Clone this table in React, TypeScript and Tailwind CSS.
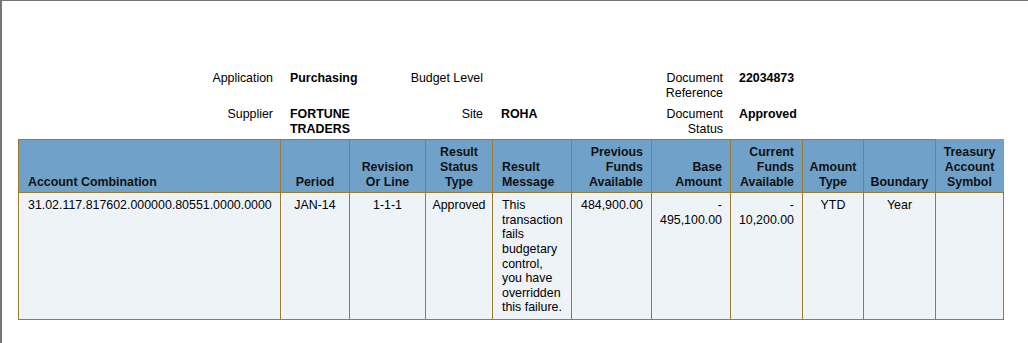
import type { ReactNode } from 'react';

type Align = 'left' | 'center' | 'right';

type Column = {
    label: string;
    width: string;
    align: Align;
};

const columns: Column[] = [
    { label: 'Account Combination', width: 'w-[262px]', align: 'left' },
    { label: 'Period', width: 'w-[69px]', align: 'center' },
    { label: 'Revision Or Line', width: 'w-[76px]', align: 'center' },
    { label: 'Result Status Type', width: 'w-[67px]', align: 'center' },
    { label: 'Result Message', width: 'w-[79px]', align: 'left' },
    { label: 'Previous Funds Available', width: 'w-[80px]', align: 'right' },
    { label: 'Base Amount', width: 'w-[79px]', align: 'right' },
    { label: 'Current Funds Available', width: 'w-[72px]', align: 'right' },
    { label: 'Amount Type', width: 'w-[61px]', align: 'center' },
    { label: 'Boundary', width: 'w-[72px]', align: 'center' },
    { label: 'Treasury Account Symbol', width: 'w-[68px]', align: 'center' },
];

const alignClass: Record<Align, string> = {
    left: 'text-left pl-[9px] pr-[8px]',
    center: 'text-center px-[5px]',
    right: 'text-right pl-[5px] pr-[8px]',
};

const row: ReactNode[] = [
    '31.02.117.817602.000000.80551.0000.0000',
    'JAN-14',
    '1-1-1',
    'Approved',
    'This transaction fails budgetary control, you have overridden this failure.',
    '484,900.00',
    <>
        -<br />
        495,100.00
    </>,
    <>
        -<br />
        10,200.00
    </>,
    'YTD',
    'Year',
    '',
];

function InfoLabel({ children }: { children: ReactNode }) {
    return <div className="text-right">{children}</div>;
}

function InfoValue({ children, className = '' }: { children?: ReactNode; className?: string }) {
    return <div className={`font-bold ${className}`.trim()}>{children}</div>;
}

export default function App() {
    return (
        <div className="min-h-[343px] bg-white border-t border-l-2 border-[#767676] pt-[70px] font-[Liberation_Sans,Arial,sans-serif] text-[12.4px] leading-[14.6px] text-black">
            {/* header info block */}
            <div className="ml-[178px] grid grid-cols-[93px_107px_103px_163px_77px_200px] gap-y-[7px]">
                <InfoLabel>Application</InfoLabel>
                <InfoValue className="pl-[17px]">Purchasing</InfoValue>
                <InfoLabel>Budget Level</InfoLabel>
                <InfoValue className="pl-[18px]" />
                <div className="pl-[17px] text-right">Document Reference</div>
                <InfoValue className="pl-[16px]">22034873</InfoValue>

                <InfoLabel>Supplier</InfoLabel>
                <InfoValue className="pl-[17px]">FORTUNE TRADERS</InfoValue>
                <InfoLabel>Site</InfoLabel>
                <InfoValue className="pl-[18px]">ROHA</InfoValue>
                <div className="pl-[17px] text-right">Document Status</div>
                <InfoValue className="pl-[16px]">Approved</InfoValue>
            </div>

            <table className="ml-[16px] mt-[3px] w-[985px] table-fixed border-collapse">
                <colgroup>
                    {columns.map((col) => (
                        <col key={col.label} className={col.width} />
                    ))}
                </colgroup>
                <thead className="bg-[#70a1c9]">
                    <tr>
                        {columns.map((col, i) => (
                            <th
                                key={col.label}
                                className={`border border-[#9c7b30] pt-[5px] pb-[3px] align-bottom font-bold text-[#111] ${alignClass[col.align]} ${
                                    i === columns.length - 1 ? 'border-t-[#70a1c9] border-r-[#70a1c9]' : ''
                                }`}
                            >
                                {col.label}
                            </th>
                        ))}
                    </tr>
                </thead>
                <tbody className="bg-[#eef3f8]">
                    <tr>
                        {row.map((cell, i) => (
                            <td
                                key={`cell-${i}`}
                                className={`border border-[#9c7b30] pt-[5px] pb-[4px] align-top ${alignClass[columns[i].align]}`}
                            >
                                {cell}
                            </td>
                        ))}
                    </tr>
                </tbody>
            </table>
        </div>
    );
}
